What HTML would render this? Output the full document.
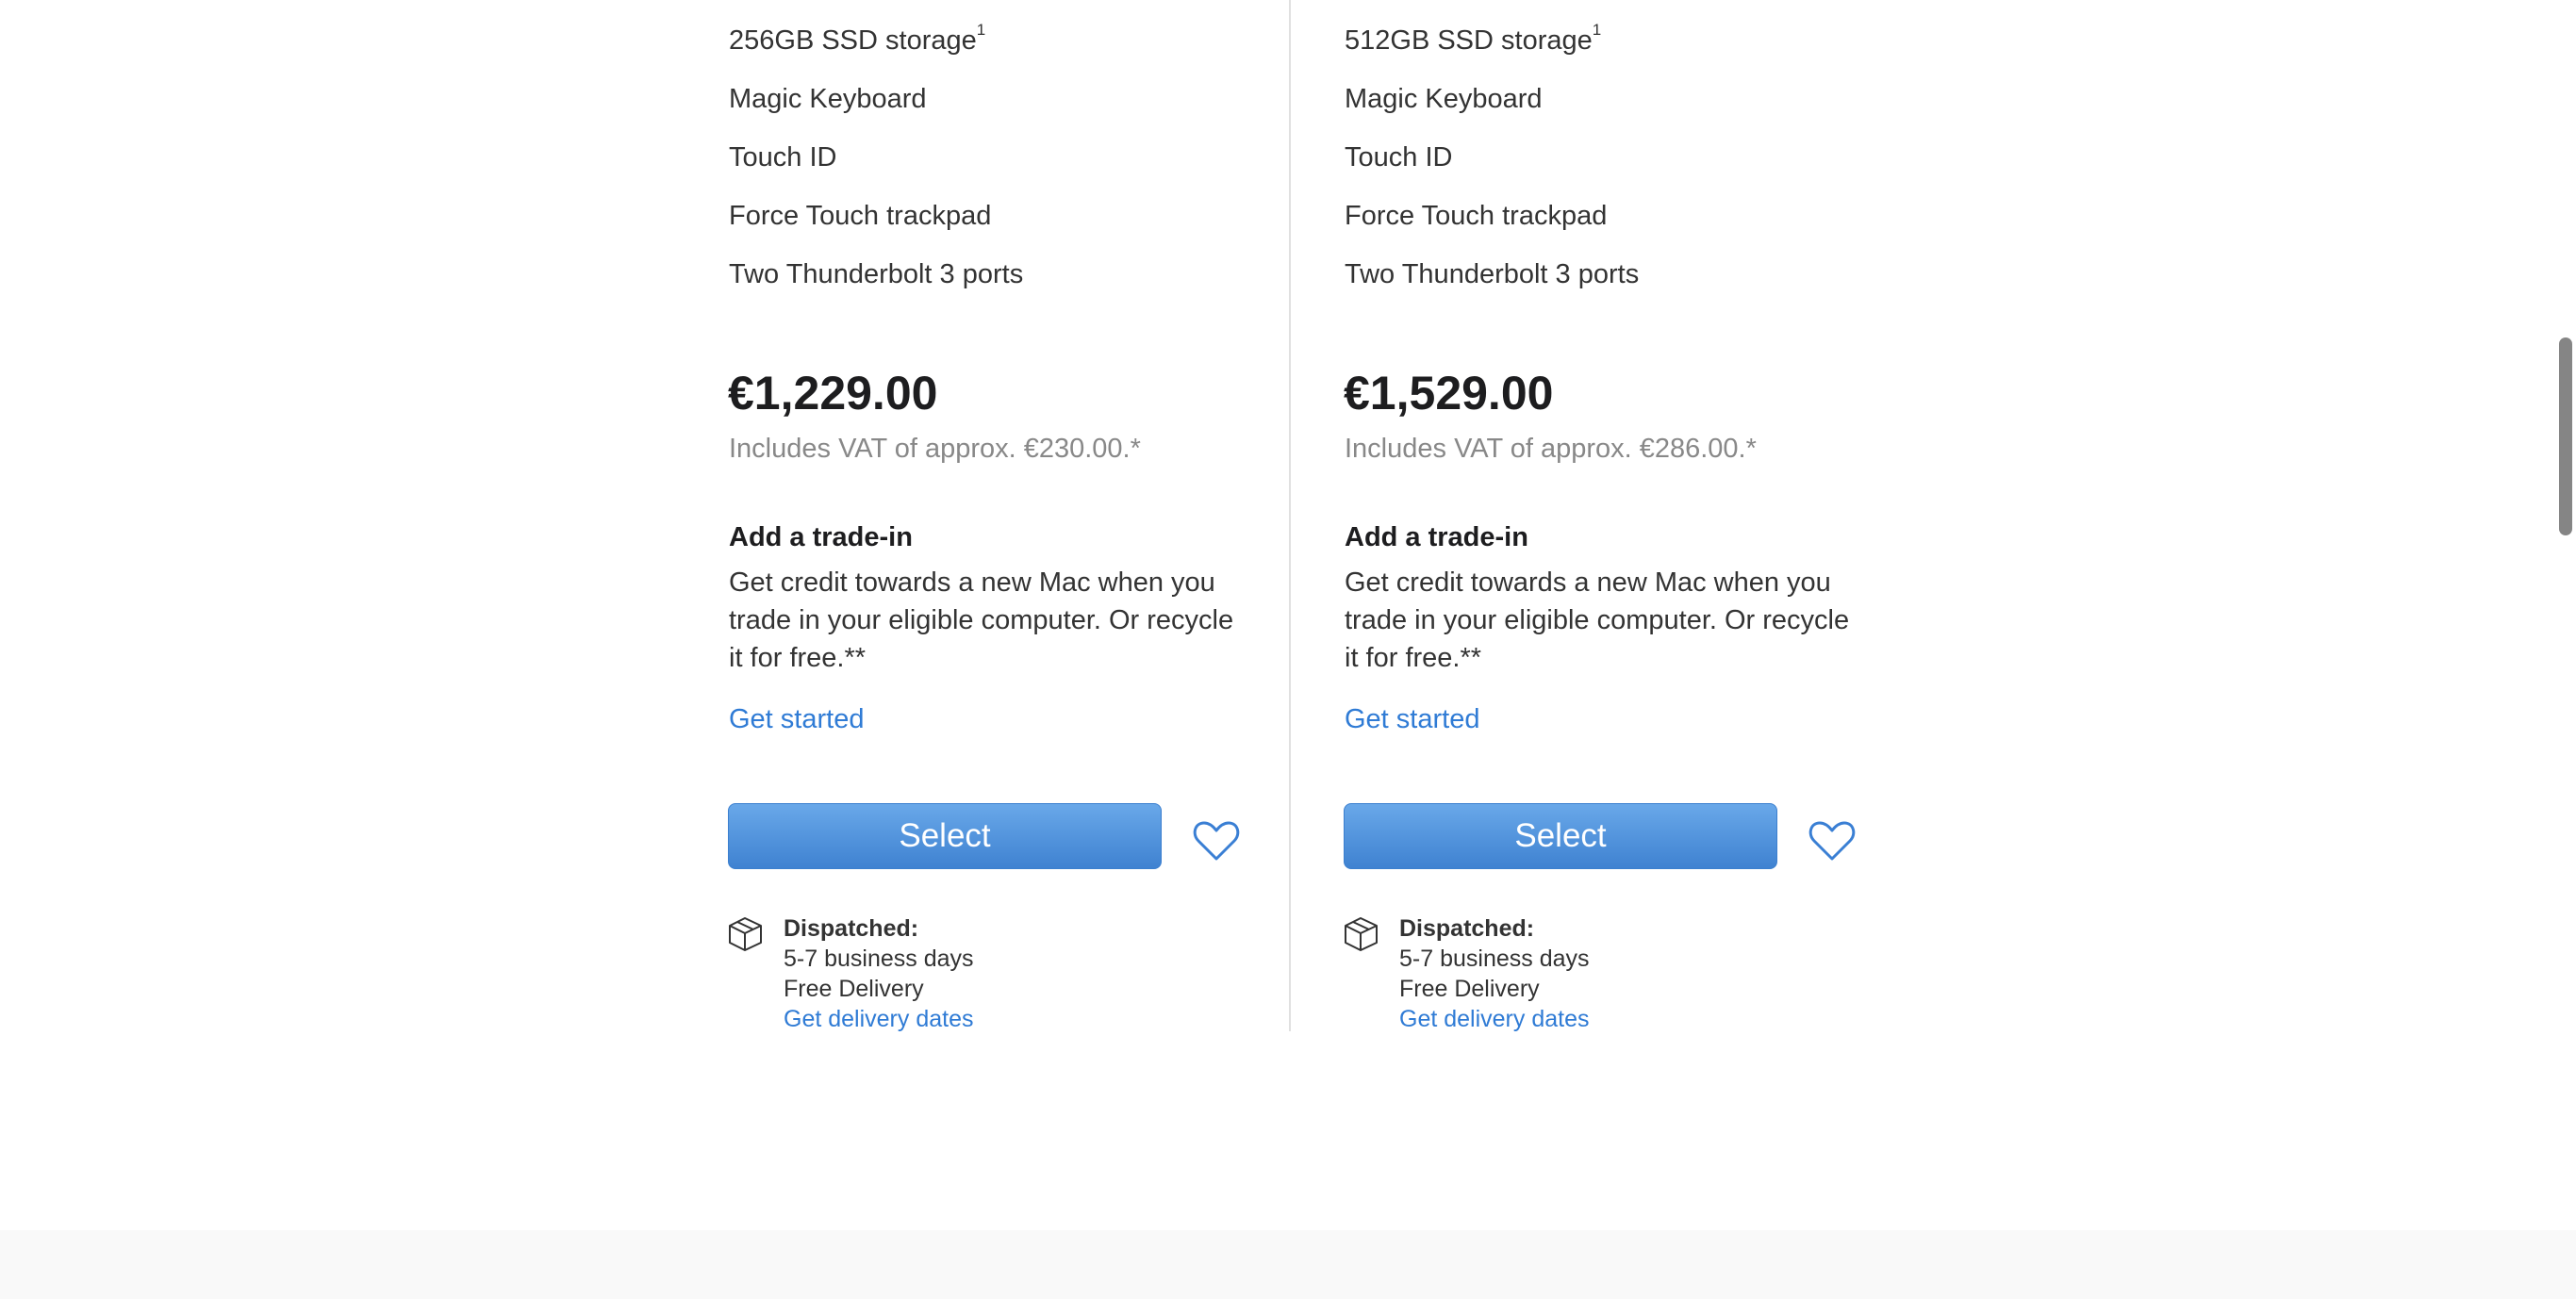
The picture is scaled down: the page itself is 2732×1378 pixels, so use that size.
<!DOCTYPE html>
<html><head><meta charset="utf-8"><style>
html,body{margin:0;padding:0;width:2732px;height:1378px;background:#fff;overflow:hidden;position:relative;font-family:"Liberation Sans",Arial,sans-serif;}
.a{position:absolute;white-space:nowrap;}
.t{font-size:29px;line-height:40px;color:#333;}
.price{font-size:50px;line-height:60px;font-weight:bold;color:#1d1d1f;}
.vat{font-size:29px;line-height:40px;color:#888;}
.h{font-size:29px;line-height:40px;font-weight:bold;color:#1d1d1f;}
.link{color:#2f7bd5;}
.btn{position:absolute;width:458px;height:68px;border:1px solid #3b7fcf;border-radius:8px;background:linear-gradient(#69a8e9,#3f82d1);color:#fff;font-size:35px;line-height:68px;text-align:center;}
.d{font-size:25px;line-height:32px;color:#333;}
sup{font-size:17px;line-height:0;position:relative;top:-4px;vertical-align:super;}
</style></head><body>

<div class="a" style="left:1367px;top:0;width:2px;height:1094px;background:#e0e0e0"></div>
<div class="a" style="left:0;top:1305px;width:2732px;height:73px;background:#f9f9f9"></div>
<div class="a" style="left:2714px;top:358px;width:14px;height:210px;border-radius:7px;background:#858585"></div>

<!-- column 1 -->
<div class="a" style="left:773px;top:0;">
  <div class="a t" style="top:23px">256GB SSD storage<sup>1</sup></div>
  <div class="a t" style="top:85px">Magic Keyboard</div>
  <div class="a t" style="top:147px">Touch ID</div>
  <div class="a t" style="top:209px">Force Touch trackpad</div>
  <div class="a t" style="top:271px">Two Thunderbolt 3 ports</div>
  <div class="a price" style="top:387px;left:-1px">€1,229.00</div>
  <div class="a vat" style="top:456px">Includes VAT of approx. €230.00.*</div>
  <div class="a h" style="top:550px">Add a trade-in</div>
  <div class="a t" style="top:598px">Get credit towards a new Mac when you<br>trade in your eligible computer. Or recycle<br>it for free.**</div>
  <div class="a t link" style="top:743px">Get started</div>
  <div class="btn" style="left:-1px;top:852px">Select</div>
  <svg class="a" style="left:492px;top:870px" width="50" height="44" viewBox="0 0 50 44"><path d="M25 41 L6 22 C-1 15 2 3 12 3 C18 3 22 7 25 11 C28 7 32 3 38 3 C48 3 51 15 44 22 Z" fill="none" stroke="#3a7fd4" stroke-width="3" stroke-linejoin="round"/></svg>
  <svg class="a" style="left:-1px;top:972px" width="38" height="38" viewBox="0 0 38 38"><g fill="none" stroke="#333" stroke-width="2" stroke-linejoin="round"><path d="M18 2 L35 10 L35 28 L18 36 L2 28 L2 10 Z"/><path d="M2 10 L18 18 L35 10 M18 18 L18 36 M10 6 L27 14"/></g></svg>
  <div class="a d" style="left:58px;top:969px"><b>Dispatched:</b><br>5-7 business days<br>Free Delivery<br><span class="link">Get delivery dates</span></div>
</div>

<!-- column 2 -->
<div class="a" style="left:1426px;top:0;">
  <div class="a t" style="top:23px">512GB SSD storage<sup>1</sup></div>
  <div class="a t" style="top:85px">Magic Keyboard</div>
  <div class="a t" style="top:147px">Touch ID</div>
  <div class="a t" style="top:209px">Force Touch trackpad</div>
  <div class="a t" style="top:271px">Two Thunderbolt 3 ports</div>
  <div class="a price" style="top:387px;left:-1px">€1,529.00</div>
  <div class="a vat" style="top:456px">Includes VAT of approx. €286.00.*</div>
  <div class="a h" style="top:550px">Add a trade-in</div>
  <div class="a t" style="top:598px">Get credit towards a new Mac when you<br>trade in your eligible computer. Or recycle<br>it for free.**</div>
  <div class="a t link" style="top:743px">Get started</div>
  <div class="btn" style="left:-1px;top:852px">Select</div>
  <svg class="a" style="left:492px;top:870px" width="50" height="44" viewBox="0 0 50 44"><path d="M25 41 L6 22 C-1 15 2 3 12 3 C18 3 22 7 25 11 C28 7 32 3 38 3 C48 3 51 15 44 22 Z" fill="none" stroke="#3a7fd4" stroke-width="3" stroke-linejoin="round"/></svg>
  <svg class="a" style="left:-1px;top:972px" width="38" height="38" viewBox="0 0 38 38"><g fill="none" stroke="#333" stroke-width="2" stroke-linejoin="round"><path d="M18 2 L35 10 L35 28 L18 36 L2 28 L2 10 Z"/><path d="M2 10 L18 18 L35 10 M18 18 L18 36 M10 6 L27 14"/></g></svg>
  <div class="a d" style="left:58px;top:969px"><b>Dispatched:</b><br>5-7 business days<br>Free Delivery<br><span class="link">Get delivery dates</span></div>
</div>

</body></html>
